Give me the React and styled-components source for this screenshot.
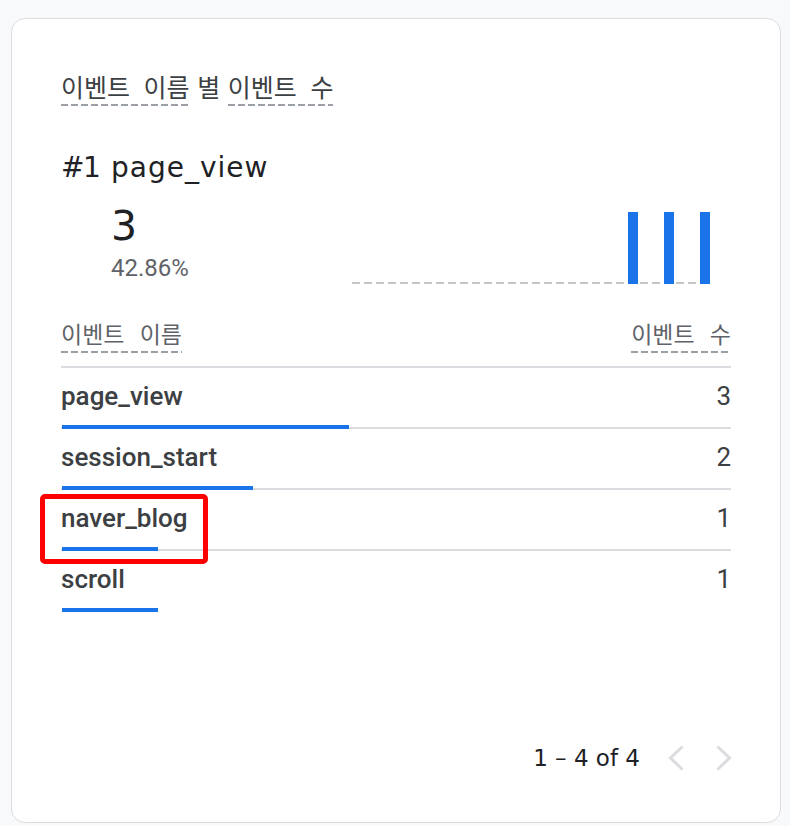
import React from 'react';
import styled, { createGlobalStyle } from 'styled-components';

const GlobalStyle = createGlobalStyle`
  html, body {
    margin: 0;
    padding: 0;
    background: #f8f9fa;
  }
  body {
    font-family: Roboto, "Noto Sans CJK KR", sans-serif;
    color: #3c4043;
  }
`;

const events = [
  { name: 'page_view', count: 3 },
  { name: 'session_start', count: 2 },
  { name: 'naver_blog', count: 1, highlight: true },
  { name: 'scroll', count: 1 },
];

const total = events.reduce((sum, e) => sum + e.count, 0);

// daily series for the sparkline, last three days have data
const series = Array.from({ length: 30 }, (_, i) => (i === 23 || i === 26 || i === 29 ? 1 : 0));

const Page = styled.div`
  padding: 18px 9px 3px 11px;
`;

const Card = styled.div`
  box-sizing: border-box;
  height: 805px;
  display: flex;
  flex-direction: column;
  background: #fff;
  border: 1px solid #dadce0;
  border-radius: 14px;
  padding: 52px 49px 40px 49px;
`;

const Dotted = styled.span`
  display: inline-block;
  padding-bottom: ${({ pad }) => pad || 5}px;
  word-spacing: ${({ spacing }) => spacing || 0}px;
  background-image: repeating-linear-gradient(to right, #9aa0a6 0 7px, transparent 7px 10px);
  background-size: 100% 2px;
  background-position: left bottom;
  background-repeat: no-repeat;
`;

const CardTitle = styled.div`
  font-family: "Noto Sans CJK KR", sans-serif;
  font-size: 25px;
  line-height: 30px;
  color: #3c4043;
  word-spacing: 2px;
`;

const Plain = styled.span`
  display: inline-block;
`;

const Hero = styled.div`
  display: flex;
  align-items: flex-end;
  margin-top: 44px;
`;

const HeroText = styled.div`
  display: flex;
  flex-direction: column;
  padding-bottom: 4px;
`;

const HeroTitle = styled.div`
  display: flex;
  font-family: "DejaVu Sans", sans-serif;
  font-size: 28px;
  line-height: 36px;
  color: #202124;
`;

const Rank = styled.span`
  flex: 0 0 50px;
  letter-spacing: -1.5px;
`;

const HeroName = styled.span`
  letter-spacing: 1px;
`;

const HeroValue = styled.div`
  margin-left: 50px;
  margin-top: 17px;
  font-family: "DejaVu Sans", sans-serif;
  font-size: 41px;
  line-height: 46px;
  color: #202124;
`;

const HeroPercent = styled.div`
  margin-left: 50px;
  margin-top: 7px;
  font-size: 24px;
  line-height: 24px;
  color: #5f6368;
`;

const Chart = styled.svg`
  display: block;
  margin-left: auto;
  margin-right: 19px;
`;

const TableHead = styled.div`
  display: flex;
  justify-content: space-between;
  align-items: flex-end;
  margin-top: 35px;
  padding-bottom: 13px;
  border-bottom: 2px solid #dadce0;
  font-family: "Noto Sans CJK KR", sans-serif;
  font-size: 23px;
  line-height: 28px;
  color: #5f6368;
`;

const Row = styled.div`
  position: relative;
  display: flex;
  flex-direction: column;
  padding-top: 15px;
`;

const RowLine = styled.div`
  display: flex;
  justify-content: space-between;
  font-size: 26px;
  font-weight: 500;
  line-height: 27px;
  color: #3c4043;
`;

const Count = styled.span`
  font-weight: 400;
`;

const Track = styled.div`
  margin-top: 15px;
  height: 4px;
  display: flex;
  align-items: flex-end;
  background: ${({ last }) =>
    last ? 'transparent' : 'linear-gradient(to top, #dadce0 2px, transparent 2px)'};
`;

const Fill = styled.div`
  height: 4px;
  margin-left: 1px;
  background: #1a73e8;
`;

const Highlight = styled.div`
  position: absolute;
  left: -21px;
  top: 4px;
  width: 168px;
  height: 70px;
  box-sizing: border-box;
  border: 5px solid #ff0000;
  border-radius: 5px;
  pointer-events: none;
`;

const Footer = styled.div`
  margin-top: auto;
  margin-right: -17px;
  display: flex;
  justify-content: flex-end;
  align-items: center;
  height: 48px;
`;

const Range = styled.span`
  font-family: "DejaVu Sans", sans-serif;
  font-size: 23px;
  color: #202124;
  margin-right: 12px;
`;

const NavButton = styled.button`
  width: 48px;
  height: 48px;
  padding: 0;
  border: none;
  background: none;
  display: flex;
  align-items: center;
  justify-content: center;
`;

const Chevron = ({ dir }) => (
  <svg width="48" height="48" viewBox="0 0 48 48">
    <polyline
      points={dir === 'left' ? '30.5,12.5 18.5,24 30.5,35.5' : '17.5,12.5 29.5,24 17.5,35.5'}
      fill="none"
      stroke="#dadce0"
      strokeWidth="3"
    />
  </svg>
);

const Sparkline = () => {
  const slot = 12;
  const h = 72;
  return (
    <Chart width={series.length * slot} height={h} viewBox={`0 0 ${series.length * slot} ${h}`}>
      <line
        x1="0"
        y1={h - 1}
        x2={series.length * slot}
        y2={h - 1}
        stroke="#c4c7c5"
        strokeWidth="2"
        strokeDasharray="8 4"
      />
      {series.map((v, i) =>
        v ? <rect key={i} x={i * slot} y={0} width={10} height={h} fill="#1a73e8" /> : null
      )}
    </Chart>
  );
};

export default function App() {
  return (
    <Page>
      <GlobalStyle />
      <Card>
        <CardTitle>
          <Dotted spacing={8}>이벤트 이름</Dotted> <Plain>별</Plain> <Dotted spacing={8}>이벤트 수</Dotted>
        </CardTitle>

        <Hero>
          <HeroText>
            <HeroTitle>
              <Rank>#1</Rank>
              <HeroName>page_view</HeroName>
            </HeroTitle>
            <HeroValue>3</HeroValue>
            <HeroPercent>42.86%</HeroPercent>
          </HeroText>
          <Sparkline />
        </Hero>

        <TableHead>
          <Dotted pad={6} spacing={10}>이벤트 이름</Dotted>
          <Dotted pad={6} spacing={10}>이벤트 수</Dotted>
        </TableHead>

        {events.map((e, i) => (
          <Row key={e.name}>
            <RowLine>
              <span>{e.name}</span>
              <Count>{e.count}</Count>
            </RowLine>
            <Track last={i === events.length - 1}>
              <Fill style={{ width: `${(e.count / total) * 100}%` }} />
            </Track>
            {e.highlight && <Highlight />}
          </Row>
        ))}

        <Footer>
          <Range>1 – 4 of 4</Range>
          <NavButton disabled aria-label="이전">
            <Chevron dir="left" />
          </NavButton>
          <NavButton disabled aria-label="다음">
            <Chevron dir="right" />
          </NavButton>
        </Footer>
      </Card>
    </Page>
  );
}
